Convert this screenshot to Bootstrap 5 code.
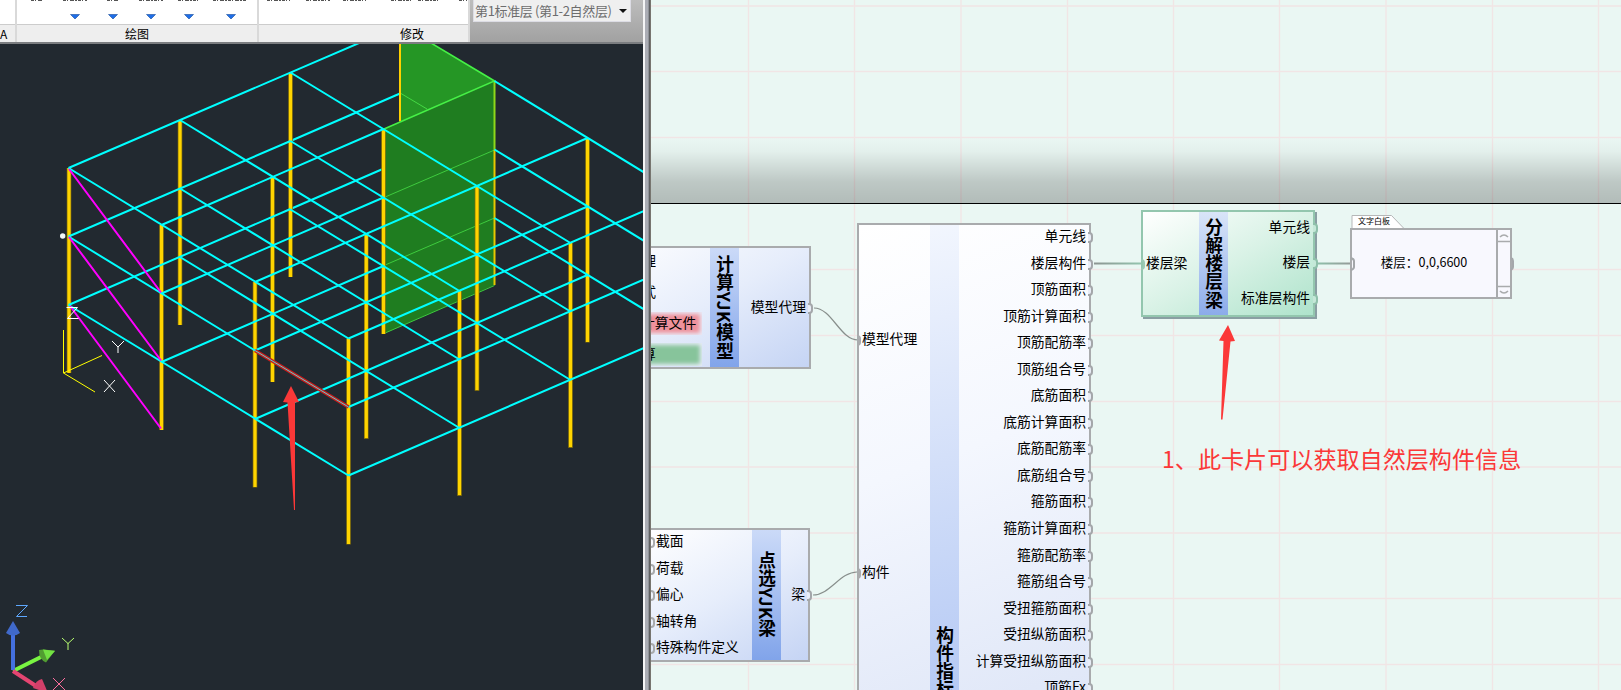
<!DOCTYPE html>
<html lang="zh-CN">
<head>
<meta charset="utf-8">
<title>YJK 构件信息</title>
<link href="https://cdn.jsdelivr.net/npm/bootstrap@5.3.0/dist/css/bootstrap.min.css" rel="stylesheet">
<style>
body{width:1621px;height:690px;overflow:hidden;font:13.8px/20px "Noto Sans CJK SC",sans-serif;color:#000}
.cad{width:643px;background:#222930}
.splitter{width:8px;background:linear-gradient(90deg,#f5f5f6 0 2px,#abadb5 2px 5px,#8f9298 5px 6px,#5f6062 6px 7px,#77756f 7px)}
.ribbon{height:44px;background:#bbb;border-bottom:2px solid #7b7d80}
.group{background:#fff;border-right:2px solid #d9d9d9}
.group-name{height:18px;background:#eee;border-top:1px solid #ccc;font-size:12px;line-height:18px;padding-bottom:1px}
.g-view{width:17px}.g-draw{width:242px}.g-edit{width:211px}
.g-edit .group-name{padding-left:97px}
.floorbar{background:linear-gradient(#bdbdbd,#a1a1a1)}
.floorpick{width:158px;height:22px;margin-left:3px;background:#efefef;border:1px solid #dcdce4;border-top:0;font-size:13px;line-height:22px;color:#6d6d6d;padding-left:1px;white-space:nowrap}
.floorpick span{letter-spacing:-.35px}
.floorpick svg{margin:8px 2px 0 0}
.board{background:#eaf7f3}
.nd{position:absolute;border:2px solid #a9abad;background:linear-gradient(150deg,#fff 0%,#e6edfb 50%,#c5d4f4 100%)}
.strip{position:absolute;top:0;bottom:0;width:29px;background:linear-gradient(#cbdaf8,#81a4ea);writing-mode:vertical-rl;text-orientation:mixed;font-weight:700;font-size:17.7px;letter-spacing:.6px;line-height:29px;text-align:center}
.outs{position:absolute;right:3px;text-align:right}
.ins{position:absolute;left:3px}
.pt{position:relative;height:26.56px;line-height:26.56px;white-space:nowrap}
.outs .pt::after{content:"";position:absolute;right:-7px;top:10px;width:5px;height:11px;border:2px solid #a4a7aa;border-left:0;border-radius:0 4px 4px 0;background:#e9edf6}
.ins .pt::before{content:"";position:absolute;left:-5px;top:10px;width:4px;height:11px;border:2px solid #a9abad;border-left:0;border-radius:0 4px 4px 0}
.n-calc{left:-60px;top:246px;width:220px;height:123px}
.n-calc .strip{left:117px}
.n-calc .outs{top:45px}
.n-pick{left:-10px;top:528px;width:169px;height:134px}
.n-pick .strip{left:109px}
.n-pick .ins{left:13px;top:-3px}
.n-pick .outs{top:50px}
.n-index{left:206px;top:223px;width:234px;height:860px;background:linear-gradient(160deg,#fff 0%,#f4f7fe 28%,#e1e8f8 56%,#c5d4f4 100%)}
.n-index .strip{left:71px;background:linear-gradient(172deg,#f2f6fe,#b5c9f4 55%,#81a4ea);text-align:left;padding-top:401px}
.n-index .outs{top:-3px}
.n-split{left:490px;top:210px;width:174px;height:107px;border-color:#93c6ae;box-shadow:2px 2px 0 #8a9fa3;background:linear-gradient(150deg,#fff 0%,#d9f2e6 50%,#aee3cb 100%)}
.n-split .strip{left:56px;background:linear-gradient(#d9e5f8,#8cabea)}
.n-split .outs{top:1px}
.n-split .pt{height:35.3px}
.n-split .outs .pt::after{border-color:#8fc0aa;background:#c5e8d8;right:-8px}
.n-split .ins{top:37px}
.n-split .ins .pt::before{border-color:#9bcab5}
.chipbox{position:absolute;overflow:hidden;height:23px;line-height:20px;box-shadow:inset 0 0 4px 2px #e8ecf8}
.n-text{left:699px;top:228px;width:162px;height:71px;background:#f8f8fe}
.val{width:146px;text-align:center;font-size:12.6px;padding-bottom:4px}
.sb{width:14px;border-left:2px solid #a9abad}
.sb svg{display:block}
.wires,.grid-bg{position:absolute;left:0;top:0}
.tabname{font-size:8px;line-height:12px;position:absolute;left:707px;top:215px}
.note{position:absolute;left:511px;top:442px;font-size:23.1px;line-height:32px;color:#fb3838;white-space:nowrap}
</style>
</head>
<body>
<main class="d-flex h-100">
<section class="cad d-flex flex-column">
 <div class="ribbon d-flex position-relative">
  <div class="group g-view d-flex flex-column justify-content-end"><div class="group-name">A</div></div>
  <div class="group g-draw d-flex flex-column justify-content-end"><div class="group-name text-center">绘图</div></div>
  <div class="group g-edit d-flex flex-column justify-content-end"><div class="group-name text-center">修改</div></div>
  <div class="floorbar flex-grow-1"><div class="floorpick d-flex justify-content-between"><span>第1标准层 (第1-2自然层)</span><svg class="flex-shrink-0" width="9" height="6"><path d="M0 1h8L4 5z" fill="#111"/></svg></div></div>
  <svg class="position-absolute top-0 start-0" width="468" height="24">
   <g stroke="#555" stroke-width="1.2" stroke-dasharray="3 1 1 2 4 1 2 1"><path d="M31 .5h12M63 .5h24M107 .5h12M139 .5h24M178 .5h22M213 .5h33M267 .5h23M306 .5h24M343 .5h23M391 .5h22M418 .5h22M459 .5h8"/></g>
   <g fill="#1e6ee8" stroke="#174e9c" stroke-width=".6"><path d="M70.500 14.500h9l-4.500 4.500zM108.500 14.500h9l-4.500 4.500zM146.500 14.500h9l-4.500 4.500zM184.500 14.500h9l-4.500 4.500zM226.500 14.500h9l-4.500 4.500z"/></g>
  </svg>
 </div>
 <svg class="d-block" width="643" height="646" viewBox="0 44 643 646" fill="none">
  <path d="M290.500 141L400 93.500M290.500 209L400 161.500" stroke="#0ff" stroke-width="2"/>
  <path d="M400 40h26L494.500 81 400 122z" fill="#259625"/>
  <path d="M400 40v81.500" stroke="#ffd000" stroke-width="2"/>
  <path d="M401 93.500L427 109" stroke="#44d944"/>
  <path d="M384 129L494.500 81V285L384 333.500z" fill="#1f7d20"/>
  <path d="M384 197.500L494.500 150M384 265.500L494.500 218M384 333.500L494.500 285.500" stroke="#3ecb3e"/>
  <path d="M494.500 81V150" stroke="#8fd81a" stroke-width="2"/><path d="M494.500 150V285" stroke="#e8c800" stroke-width="2"/>
  <path d="M426 40L494.500 81 384 129" stroke="#46f046" stroke-width="1.6"/>
  <path d="M69 168V373M180 120V325M290.500 73V277M161.500 225V430M272.500 177V382M383.500 129V334M255 282V487.500M366.300 234V439M477 186V391M587.500 138V342.500M348.500 338.500V544.500M459.500 291V496M570.500 243V448" stroke="#806c0a" stroke-width="4.600"/>
  <path d="M69 168V373M180 120V325M290.500 73V277M161.500 225V430M272.500 177V382M383.500 129V334M255 282V487M366.300 234V438M477 186V390M587.500 138V342M348.500 338.500V544M459.500 291V495M570.500 243V447" stroke="#ffd400" stroke-width="3.200"/>
  <g stroke="#0ff" stroke-width="2">
   <path d="M68.500 168L401 25M161.500 225L383.500 129M255 282L587.500 138M348.500 338.500L681 195M68.500 168L348.500 338.500M180 120L459.500 291M290.500 72.500L570.500 243M494.500 81L681 195"/>
   <path d="M68.500 236.500L290.500 141M161.500 293.500L383.500 197.500M255 350.500L587.500 206.500M348.500 407L681 263.500M68.500 236.500L255 350.500M180 188.500L459.500 359.500M290.500 141L570.500 311.500M494.500 149.500L681 263.500"/>
   <path d="M68.500 305L290.500 209M161.500 362L383.500 266M255 419L587.500 275M348.500 475.500L681 332M68.500 305L348.500 475.500M180 257L459.500 428M290.500 209.500L570.500 380M494.500 218L681 332"/>
  </g>
  <path d="M255 350.500L348.500 407" stroke="#c81d1d" stroke-width="3.600"/><path d="M255 350.500L348.500 407" stroke="#5ed0d0"/>
  <path d="M69 169L161 292.500M69 237L161 360.500M70 306L161 428.500" stroke="#f0f" stroke-width="2"/>
  <circle cx="62.700" cy="236" r="2.700" fill="#f1f7f8"/>
  <path d="M63.500 330V373L102 355.500M63.500 373L95 392" stroke="#ff0"/>
  <path d="M66.500 307.500h11l-10 11h11M112 341l6 6 6-6M118 347v6M104 380l11 12M115 380l-11 12" stroke="#fff"/>
  <path d="M291 386l8 16-4 .5L295 510h-1L287.500 402.500 283 402z" fill="#fb3838"/>
  <path d="M13 671L51 652" stroke="#79f442" stroke-width="4"/><path d="M39 650l4-.5 12 1-9 12q-7-3-7-12" fill="#519d31"/><path d="M43 649.500l12 1.500-8 9z" fill="#72e143"/>
  <path d="M13 670V634" stroke="#4470df" stroke-width="4"/><path d="M13 621l7 12q-7 5-14 0z" fill="#4069ca"/>
  <path d="M13 671l23 15" stroke="#e54571" stroke-width="4"/><path d="M42 679l6 14-15-5q3-8 9-9" fill="#d4406a"/>
  <path d="M16 605.500h11.500l-11 11H27" stroke="#5ea8ff"/><path d="M62 638l6 5.500 6-5.500M68 643v7" stroke="#b8ff70"/><path d="M53 678l12 12M65 678L53 690" stroke="#ff6d9d"/>
 </svg>
</section>
<div class="splitter"></div>
<section class="board flex-grow-1 position-relative overflow-hidden">
 <svg class="grid-bg" width="970" height="690" viewBox="651 0 970 690">
  <defs><linearGradient id="fade" x2="0" y2="1"><stop offset="0" stop-color="#000" stop-opacity="0"/><stop offset=".22" stop-color="#000" stop-opacity=".03"/><stop offset=".68" stop-color="#000" stop-opacity=".19"/><stop offset="1" stop-color="#000" stop-opacity=".24"/></linearGradient>
  <linearGradient id="w1" gradientUnits="userSpaceOnUse" x1="1094" x2="1141" y1="0" y2="0"><stop stop-color="#8d9592"/><stop offset="1" stop-color="#94c4ae"/></linearGradient>
  <linearGradient id="w2" gradientUnits="userSpaceOnUse" x1="1317" x2="1351" y1="0" y2="0"><stop stop-color="#8fc0aa"/><stop offset="1" stop-color="#959a98"/></linearGradient></defs>
  <path d="M748.500 0V690M854.500 0V690M961 0V690M1067.500 0V690M1173.500 0V690M1279.500 0V690M1386 0V690M1492.500 0V690M1598.500 0V690M651 6H1621M651 71.500H1621M651 137.500H1621M651 269.500H1621M651 335.500H1621M651 401.500H1621M651 467H1621M651 533H1621M651 598.500H1621M651 664.500H1621" stroke="#f1e5e5" stroke-width="1.300"/>
  <path d="M651 137h970v66H651z" fill="url(#fade)"/><path d="M651 203.500h970" stroke="#000"/>
  <g fill="none"><path d="M814 308C832 308 840 340 858 340M813 595C830 595 840 572 857 572" stroke="#888f8c" stroke-width="1.200"/>
  <path d="M1094 263.500h47v.01" stroke="url(#w1)" stroke-width="2"/><path d="M1317 263.500h34v.01" stroke="url(#w2)" stroke-width="2"/></g>
  <path d="M1352 229v-13.500h39.500l12.500 13" fill="#fff" stroke="#b5b7b8"/>
 </svg>
 <article class="nd n-calc">
  <div class="chipbox" style="left:58px;top:2px;width:5px;box-shadow:none;direction:rtl">理</div>
  <div class="chipbox" style="left:58px;top:33px;width:5px;box-shadow:none;direction:rtl">式</div>
  <div class="chipbox text-nowrap" style="left:48px;top:64px;width:61px;background:#ee919b">计算文件</div>
  <div class="chipbox" style="left:49px;top:95px;width:60px;background:#87c49b">算</div>
  <div class="strip">计算YJK模型</div>
  <div class="outs"><div class="pt">模型代理</div></div>
 </article>
 <article class="nd n-pick">
  <div class="ins"><div class="pt">截面</div><div class="pt">荷载</div><div class="pt">偏心</div><div class="pt">轴转角</div><div class="pt">特殊构件定义</div></div>
  <div class="strip">点选YJK梁</div>
  <div class="outs"><div class="pt">梁</div></div>
 </article>
 <article class="nd n-index">
  <div class="ins" style="top:100px"><div class="pt">模型代理</div></div>
  <div class="ins" style="top:333px"><div class="pt">构件</div></div>
  <div class="strip">构件指标</div>
  <div class="outs"><div class="pt">单元线</div><div class="pt">楼层构件</div><div class="pt">顶筋面积</div><div class="pt">顶筋计算面积</div><div class="pt">顶筋配筋率</div><div class="pt">顶筋组合号</div><div class="pt">底筋面积</div><div class="pt">底筋计算面积</div><div class="pt">底筋配筋率</div><div class="pt">底筋组合号</div><div class="pt">箍筋面积</div><div class="pt">箍筋计算面积</div><div class="pt">箍筋配筋率</div><div class="pt">箍筋组合号</div><div class="pt">受扭箍筋面积</div><div class="pt">受扭纵筋面积</div><div class="pt">计算受扭纵筋面积</div><div class="pt">顶筋Fx</div></div>
 </article>
 <article class="nd n-split">
  <div class="ins"><div class="pt">楼层梁</div></div>
  <div class="strip">分解楼层梁</div>
  <div class="outs"><div class="pt">单元线</div><div class="pt">楼层</div><div class="pt">标准层构件</div></div>
 </article>
 <span class="tabname">文字白板</span>
 <article class="nd n-text d-flex align-items-center">
  <div class="val">楼层：0,0,6600</div>
  <div class="sb h-100"><svg width="12" height="67" fill="none" stroke="#a9abad" stroke-width="1.600"><path d="M0 11.500h12M0 56.500h12M2 7q4-4 8 0M2 61q4 4 8 0"/></svg></div>
 </article>
 <svg class="wires" width="970" height="690" viewBox="651 0 970 690" fill="none">
  <path d="M1351 258q3 1 3 3v6q0 2-3 3M1511 258q2 1 2 3v6q0 2-2 3" stroke="#a4a7aa" stroke-width="2"/>
  <path d="M1228 325l7 16-4.500.5L1222.500 419.500h-1.500L1223.500 341l-4.500-.5z" fill="#fb3838"/>
 </svg>
 <div class="note">1、此卡片可以获取自然层构件信息</div>
</section>
</main>
<script src="https://cdn.jsdelivr.net/npm/bootstrap@5.3.0/dist/js/bootstrap.bundle.min.js"></script>
</body>
</html>
